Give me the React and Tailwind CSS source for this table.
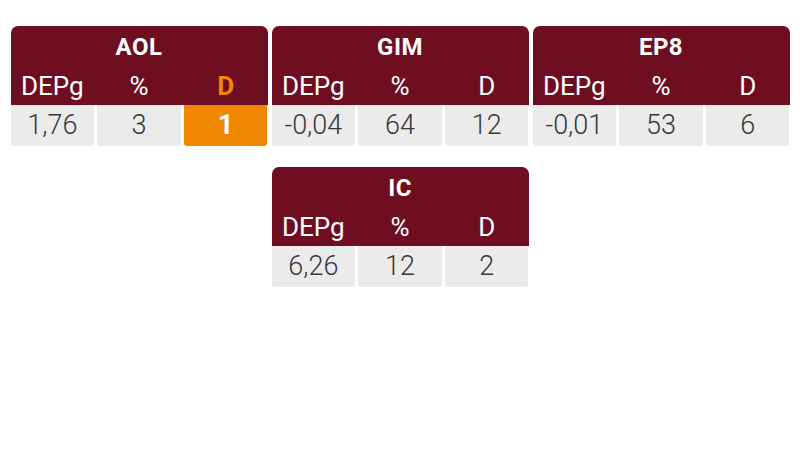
import React from "react";

const tables = [
  { title: "AOL", values: ["1,76", "3", "1"], highlight: 2 },
  { title: "GIM", values: ["-0,04", "64", "12"] },
  { title: "EP8", values: ["-0,01", "53", "6"] },
];

const extra = [{ title: "IC", values: ["6,26", "12", "2"] }];

const labels = ["DEPg", "%", "D"];

const ScoreCard = ({ title, values, highlight }) => {
  return (
    <div className="w-[257px] flex flex-col">
      <div className="bg-[#6e0e20] rounded-t-[7px] h-[79px] flex flex-col text-white">
        <div className="h-[40px] pt-[2px] flex items-center justify-center text-[24px] font-bold leading-none tracking-[0.5px]">
          {title}
        </div>
        <div className="h-[39px] grid grid-cols-3 gap-[3px] text-[26px] leading-none">
          {labels.map((label, i) => (
            <div
              key={label}
              className={`flex items-center justify-center ${
                i === highlight ? "text-[#f18700] font-bold" : ""
              }`}
            >
              {label}
            </div>
          ))}
        </div>
      </div>
      <div className="grid grid-cols-3 gap-[3px]">
        {values.map((value, i) => (
          <div
            key={i}
            className={`h-[41px] rounded-b-[3px] flex items-center justify-center text-[27px] leading-none ${
              i === highlight
                ? "bg-[#f18700] text-white font-bold"
                : "bg-[#ebebeb] text-[#383838] font-light"
            }`}
          >
            {value}
          </div>
        ))}
      </div>
    </div>
  );
};

const App = () => {
  return (
    <div
      className="w-[800px] h-[468px] bg-white pt-[26px] flex flex-col gap-[21px]"
      style={{ fontFamily: "Roboto, 'Liberation Sans', sans-serif" }}
    >
      <div className="flex justify-center gap-[4px]">
        {tables.map((t) => (
          <ScoreCard key={t.title} {...t} />
        ))}
      </div>
      <div className="flex justify-center gap-[4px]">
        {extra.map((t) => (
          <ScoreCard key={t.title} {...t} />
        ))}
      </div>
    </div>
  );
};

export default App;
